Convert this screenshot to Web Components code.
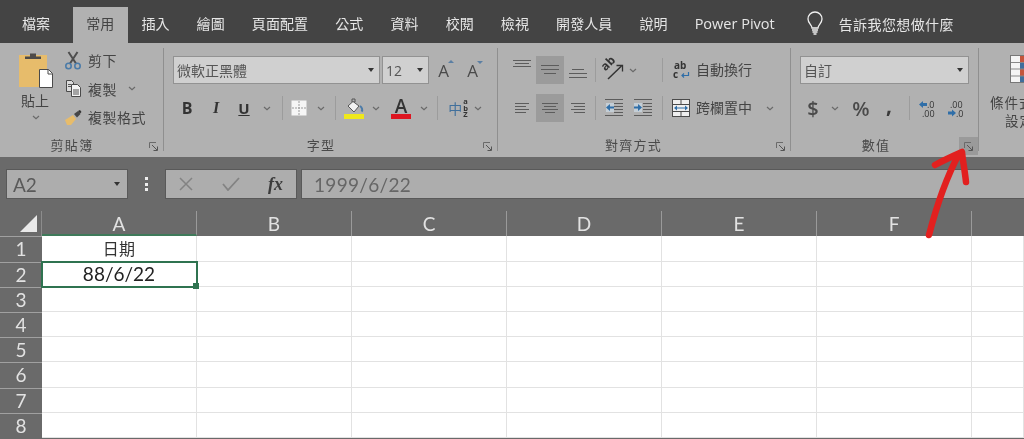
<!DOCTYPE html>
<html lang="zh-Hant">
<head>
<meta charset="utf-8">
<title>Excel</title>
<style>
  html, body { margin: 0; padding: 0; height: 439px; overflow: hidden; background: #fff; }
</style>
</head>
<body>
<excel-app></excel-app>
<script>
const CJK = '"Noto Sans CJK TC", "Open Sans", sans-serif';
const CHEV = (c = '#6a6a6a') => `<svg width="8" height="5" viewBox="0 0 8 5"><path d="M1 1l3 2.6L7 1" fill="none" stroke="${c}" stroke-width="1.2"/></svg>`;

const lines = (rows) => rows.map(([y, a, b]) => `<path d="M${a} ${y + .5}H${b}" stroke="#5c5c5c" stroke-width="1"/>`).join('');

const ICONS = {
  chev: CHEV(),
  paste: `<svg width="38" height="38" viewBox="0 0 38 38">
    <rect x="2" y="3" width="28" height="32" fill="#e7bc6b"/>
    <path d="M8 7V4.5h5V1.500h6V4.500h5V7z" fill="#4d4a48"/>
    <path d="M22.500 17.500h9l4 4v14h-13z" fill="#fff" stroke="#4a4a4a"/>
    <path d="M31 17.500v4.500h4.500" fill="none" stroke="#4a4a4a"/></svg>`,
  scissors: `<svg width="16" height="19" viewBox="0 0 16 19">
    <path d="M3.500 1l7.500 11.500M12.500 1L5 12.500" stroke="#4e4e4e" stroke-width="2" fill="none"/>
    <circle cx="3.500" cy="15" r="2.700" fill="none" stroke="#4b7ba8" stroke-width="1.600"/>
    <circle cx="12.500" cy="15" r="2.700" fill="none" stroke="#4b7ba8" stroke-width="1.600"/></svg>`,
  copy: `<svg width="17" height="17" viewBox="0 0 17 17">
    <path d="M1.500 .5h5l2 2v9h-7z" fill="#dcdcdc" stroke="#4a4a4a"/>
    <path d="M6.500 4.500h6l3 3v9h-9z" fill="#f4f4f4" stroke="#4a4a4a"/>
    <path d="M8 10h6M8 12h6M8 14h6M3 4.500h3M3 6.500h3" stroke="#555"/></svg>`,
  painter: `<svg width="17" height="15" viewBox="0 0 17 15">
    <path d="M0 10l8-5 3 4-5 6H2z" fill="#e7bc6b"/>
    <path d="M9 4l4-3 2.500 3-3.500 3.500z" fill="#464646"/>
    <path d="M13 1l2-1 1.500 2-1.500 1.500z" fill="#333"/></svg>`,
  border: `<svg width="16" height="16" viewBox="0 0 16 16">
    <rect x=".5" y=".5" width="15" height="15" fill="#f6f6f6"/>
    <path d="M8 1v14M1 8h14" stroke="#9a9a9a" stroke-dasharray="2 1"/></svg>`,
  fill: `<svg width="20" height="21" viewBox="0 0 20 21">
    <path d="M8 1l3 0 0 3-3 0z" fill="none" stroke="#555"/>
    <path d="M4 8l5-4.500 6 4.500-5 6z" fill="#f2f2f2" stroke="#555"/>
    <path d="M16 8c2 1.500 3 4 1.500 5.500" fill="none" stroke="#4b7ba8" stroke-width="2"/>
    <rect x="0" y="16" width="20" height="5" fill="#efe81c"/></svg>`,
  colorbar: `<svg width="20" height="5" viewBox="0 0 20 5"><rect width="20" height="5" fill="#dd1520"/></svg>`,
  alignTop: `<svg width="18" height="16" viewBox="0 0 18 16">${lines([[0,0,18],[3,2,16],[6,0,18]])}</svg>`,
  alignMid: `<svg width="18" height="12" viewBox="0 0 18 12">${lines([[1,0,18],[5,0,18],[9,3,15]])}</svg>`,
  alignBot: `<svg width="18" height="12" viewBox="0 0 18 12">${lines([[1,3,15],[5,0,18],[9,0,18]])}</svg>`,
  left: `<svg width="14" height="13" viewBox="0 0 14 13">${lines([[1,0,14],[4,0,11],[7,0,14],[10,0,11]])}</svg>`,
  center: `<svg width="16" height="13" viewBox="0 0 16 13">${lines([[1,0,16],[4,2,14],[7,0,16],[10,3,13]])}</svg>`,
  right: `<svg width="14" height="13" viewBox="0 0 14 13">${lines([[1,0,14],[4,3,14],[7,0,14],[10,3,14]])}</svg>`,
  outdent: `<svg width="19" height="18" viewBox="0 0 19 18">
    ${lines([[0,0,18],[4,9,18],[7,9,18],[10,9,18],[13,9,18],[16,0,18]])}
    <rect x="1" y="4" width="8" height="9" fill="#c4ced6"/>
    <path d="M1 8.500l4-3.500v2.500h4v2H5V12z" fill="#2f6ea8"/></svg>`,
  indent: `<svg width="19" height="18" viewBox="0 0 19 18">
    ${lines([[0,1,19],[4,10,19],[7,10,19],[10,10,19],[13,10,19],[16,1,19]])}
    <rect x="1" y="4" width="8" height="9" fill="#c4ced6"/>
    <path d="M9 8.500L5 5v2.500H1v2h4V12z" fill="#2f6ea8"/></svg>`,
  merge: `<svg width="18" height="18" viewBox="0 0 18 18">
    <rect x=".5" y=".5" width="17" height="17" fill="#efefef" stroke="#4a4a4a"/>
    <path d="M1 5.500h16M1 12.500h16M9 1v4M9 13v4" stroke="#4a4a4a"/>
    <path d="M2 9l3-2.500v2h8v-2l3 2.500-3 2.500v-2H5v2z" fill="#2f6ea8"/></svg>`,
  orient: `<svg width="20" height="20" viewBox="0 0 20 20">
    <text transform="translate(1.500 11.500) rotate(-45)" font-family="Open Sans" font-weight="700" font-size="12" fill="#333">ab</text>
    <path d="M4 19L17.500 6" stroke="#333" stroke-width="1.500" fill="none"/>
    <path d="M12.500 5.500h6v6" fill="none" stroke="#333" stroke-width="1.300"/></svg>`,
  wrap: `<svg width="17" height="19" viewBox="0 0 17 19">
    <text x="1" y="8" font-family="Open Sans" font-weight="700" font-size="10" fill="#333">ab</text>
    <text x="0" y="17" font-family="Open Sans" font-weight="700" font-size="10" fill="#333">c</text>
    <path d="M15.500 11v3.500H9M11 12.500l-2 2 2 2" fill="none" stroke="#2f6ea8" stroke-width="1.200"/></svg>`,
  incdec: `<svg width="16" height="17" viewBox="0 0 16 17">
    <path d="M0 4.500l4-3.500v2h4v3H4v2z" fill="#2f6ea8"/>
    <text x="8" y="8" font-family="Open Sans" font-size="9" fill="#333">.0</text>
    <text x="3" y="16.500" font-family="Open Sans" font-size="9" fill="#333">.00</text></svg>`,
  decdec: `<svg width="16" height="17" viewBox="0 0 16 17">
    <text x="3" y="8" font-family="Open Sans" font-size="9" fill="#333">.00</text>
    <path d="M9 13l-4-3.500v2H1v3h4v2z" fill="#2f6ea8"/>
    <text x="9" y="16.500" font-family="Open Sans" font-size="9" fill="#333">.0</text></svg>`,
  launcher: `<svg width="9" height="9" viewBox="0 0 9 9">
    <path d="M.5 6V.5H7" fill="none" stroke="#6a6a6a"/>
    <path d="M3 3l5 5M8.500 4.500v4h-4" fill="none" stroke="#555"/></svg>`,
  condfmt: `<svg width="20" height="28" viewBox="0 0 20 28">
    <rect x=".5" y=".5" width="19" height="27" fill="#f4f4f4" stroke="#777"/>
    <rect x="10" y="1" width="9" height="6" fill="#c4553c"/>
    <rect x="10" y="7" width="9" height="7" fill="#3f6e9c"/>
    <rect x="10" y="14" width="9" height="7" fill="#c4553c"/>
    <rect x="10" y="21" width="9" height="6" fill="#3f6e9c"/>
    <path d="M1 7.500h18M1 14h18M1 21h18" stroke="#888"/></svg>`,
  bulb: `<svg width="16" height="24" viewBox="0 0 16 24">
    <path d="M5 16c0-3-4-4.500-4-9a7 7 0 0 1 14 0c0 4.500-4 6-4 9z" fill="none" stroke="#f0f0f0" stroke-width="1.300"/>
    <path d="M5 18h6M5.500 20h5M6.500 22h3" stroke="#f0f0f0" stroke-width="1.300"/></svg>`
};

class RbIcon extends HTMLElement {
  connectedCallback() {
    const root = this.shadowRoot || this.attachShadow({ mode: 'open' });
    root.innerHTML = `<style>:host{display:inline-flex;line-height:0;} svg{overflow:visible;}</style>${ICONS[this.getAttribute('name')] || ''}`;
  }
}
customElements.define('rb-icon', RbIcon);

// one item in a ribbon row: fixed width, content centred
class RbItem extends HTMLElement {
  constructor() {
    super();
    this.attachShadow({ mode: 'open' }).innerHTML = `
      <style>
        :host { display: flex; flex: none; align-items: center; justify-content: center; height: 28px; color: #444; }
        :host([active]) { background: #9b9b9b; }
        :host([sep])::after { content: ""; width: 1px; height: 24px; background: #9c9c9c; }
      </style>
      <slot></slot>`;
  }
  connectedCallback() {
    this.style.width = this.getAttribute('w') + 'px';
  }
}
customElements.define('rb-item', RbItem);

class RibbonGroup extends HTMLElement {
  constructor() {
    super();
    this.attachShadow({ mode: 'open' }).innerHTML = `
      <style>
        :host { display: flex; flex: none; flex-direction: column; height: 103px; box-sizing: border-box; border-right: 1px solid #8f8f8f; }
        .body { flex: 1; min-height: 0; }
        .foot { display: flex; height: 16px; }
        .label { flex: 1; text-align: center; font: 13px/20px ${CJK}; color: #4a4a4a; letter-spacing: 1.300px; }
        .launch { flex: none; width: 19px; height: 18px; margin-top: 2px; display: flex; align-items: center; justify-content: center; }
        :host([hot]) .launch { background: #9a9a9a; }
      </style>
      <div class="body"><slot></slot></div>
      <div class="foot"><div class="label"></div><div class="launch"><rb-icon name="launcher"></rb-icon></div></div>`;
  }
  connectedCallback() {
    this.style.width = this.getAttribute('w') + 'px';
    const label = this.shadowRoot.querySelector('.label');
    label.textContent = this.getAttribute('label');
    const shift = +this.getAttribute('shift') || 0;
    label.style.transform = `translateX(${shift}px)`;
  }
}
customElements.define('ribbon-group', RibbonGroup);

class ExcelTabs extends HTMLElement {
  constructor() {
    super();
    const tabs = ['檔案', '常用', '插入', '繪圖', '頁面配置', '公式', '資料', '校閱', '檢視', '開發人員', '說明', 'Power Pivot'];
    this.attachShadow({ mode: 'open' }).innerHTML = `
      <style>
        :host { display: flex; height: 43px; background: #444; box-sizing: border-box; padding: 7px 0 0 8.500px; align-items: stretch; }
        .tab { flex: none; padding: 0 13.500px; font: 14px/33px ${CJK}; color: #e6e6e6; letter-spacing: .1px; }
        .tab.first { margin-right: 9px; }
        .tab.on { background: #b1b1b1; color: #444; }
        .tab.latin { font: 14.500px/34px "Open Sans", sans-serif; letter-spacing: 0; padding-right: 0; }
        .tell { display: flex; align-items: center; margin-left: 32px; height: 34px; gap: 16px; font: 14px/33px ${CJK}; color: #e6e6e6; letter-spacing: .4px; }
      </style>
      ${tabs.map((t, i) => `<div class="tab${i === 0 ? ' first' : ''}${i === 1 ? ' on' : ''}${i === 11 ? ' latin' : ''}">${t}</div>`).join('')}
      <div class="tell"><rb-icon name="bulb"></rb-icon><span>告訴我您想做什麼</span></div>`;
  }
}
customElements.define('excel-tabs', ExcelTabs);

class ExcelRibbon extends HTMLElement {
  constructor() {
    super();
    this.attachShadow({ mode: 'open' }).innerHTML = `
      <style>
        :host { display: flex; height: 114px; background: #b1b1b1; box-sizing: border-box; padding-top: 5px; overflow: hidden; font: 13px ${CJK}; color: #444; }
        .rows { display: flex; flex-direction: column; gap: 10px; padding: 8px 0 0 var(--l, 9px); }
        .row { display: flex; }
        .clip { display: flex; }
        .paste { width: 62px; flex: none; display: flex; flex-direction: column; align-items: center; padding: 4px 0 0 8px; box-sizing: border-box; font-size: 14px; line-height: 20px; }
        .paste rb-icon { margin-left: 2px; }
        .paste .c { margin-top: 5px; display: flex; }
        .small { display: flex; flex-direction: column; margin-top: -2px; }
        .small .row { height: 28.500px; align-items: center; }
        .small .txt { width: 24px; display: flex; justify-content: center; margin-left: -1px; }
        .small span { margin-left: 3px; font-size: 14px; letter-spacing: .5px; }
        .combo { box-sizing: border-box; height: 28px; display: flex; align-items: center; justify-content: space-between; background: #d0d0d0; border: 1px solid #929292; padding: 0 5px 0 3px; font-size: 14px; color: #555; flex: none; }
        .arrow { width: 0; height: 0; border: 3.500px solid transparent; border-top: 4px solid #333; border-bottom: 0; flex: none; }
        .grow { font: 17px "Open Sans", sans-serif; position: relative; color: #4a4a4a; left: -2px; }
        .grow::after { content: ""; position: absolute; top: 1px; left: 10px; border: 3px solid transparent; border-bottom: 3px solid #5b7fa3; border-top: 0; }
        .shrink { left: -1px; }
        .shrink::after { border-bottom: 0; border-top: 3px solid #5b7fa3; top: 2px; }
        .b { font: 700 16px "Open Sans", sans-serif; color: #333; }
        .i { font: italic 700 16px "Liberation Serif", serif; color: #333; }
        .u { font: 700 15px "Open Sans", sans-serif; color: #333; text-decoration: underline; }
        .stack { display: flex; flex-direction: column; align-items: center; }
        .acolor { font: 600 19px/16px "Open Sans", sans-serif; color: #333; }
        .zh { display: flex; align-items: center; color: #41709c; font-size: 14px; }
        .zh b { display: flex; flex-direction: column; color: #333; font: 700 7.500px/6.500px "Open Sans", sans-serif; margin-left: 1px; }
        .num { font: 600 20px "Open Sans", sans-serif; color: #4a4a4a; }
        .comma { font: 700 21px "Open Sans", sans-serif; color: #3a3a3a; margin-top: -6px; }
        .wide { font-size: 14px; white-space: nowrap; display: flex; align-items: center; height: 26px; }
        .cond { flex: none; padding: 0 0 0 11px; white-space: nowrap; line-height: 18px; font-size: 13.500px; width: 82px; box-sizing: border-box; }
        .cond rb-icon { margin: 7px 0 10px 20px; display: flex; }
        .cond div { letter-spacing: 1px; }
      </style>

      <ribbon-group w="164" label="剪貼簿">
        <div class="clip">
          <div class="paste">
            <rb-icon name="paste"></rb-icon>
            <span>貼上</span>
            <div class="c"><rb-icon name="chev"></rb-icon></div>
          </div>
          <div class="small">
            <div class="row"><div class="txt"><rb-icon name="scissors"></rb-icon></div><span>剪下</span></div>
            <div class="row"><div class="txt"><rb-icon name="copy"></rb-icon></div><span>複製</span><rb-item w="30"><rb-icon name="chev"></rb-icon></rb-item></div>
            <div class="row"><div class="txt"><rb-icon name="painter"></rb-icon></div><span>複製格式</span></div>
          </div>
        </div>
      </ribbon-group>

      <ribbon-group w="334" label="字型">
        <div class="rows">
          <div class="row">
            <div class="combo" style="width:207px"><span>微軟正黑體</span><i class="arrow"></i></div>
            <div class="combo" style="width:47px;margin-left:2px;font:14px 'Open Sans',sans-serif"><span>12</span><i class="arrow"></i></div>
            <rb-item w="29" style="margin-left:2px"><span class="grow">A</span></rb-item>
            <rb-item w="27"><span class="grow shrink">A</span></rb-item>
          </div>
          <div class="row">
            <rb-item w="28"><span class="b">B</span></rb-item>
            <rb-item w="30"><span class="i">I</span></rb-item>
            <rb-item w="26"><span class="u">U</span></rb-item>
            <rb-item w="20"><rb-icon name="chev"></rb-icon></rb-item>
            <rb-item w="10" sep></rb-item>
            <rb-item w="24"><rb-icon name="border"></rb-icon></rb-item>
            <rb-item w="20"><rb-icon name="chev"></rb-icon></rb-item>
            <rb-item w="8" sep></rb-item>
            <rb-item w="30"><rb-icon name="fill"></rb-icon></rb-item>
            <rb-item w="14"><rb-icon name="chev"></rb-icon></rb-item>
            <rb-item w="36"><div class="stack"><span class="acolor">A</span><rb-icon name="colorbar"></rb-icon></div></rb-item>
            <rb-item w="10"><rb-icon name="chev"></rb-icon></rb-item>
            <rb-item w="16" sep></rb-item>
            <rb-item w="26"><span class="zh">中<b><span>a</span><span>b</span><span>Z</span></b></span></rb-item>
            <rb-item w="14"><rb-icon name="chev"></rb-icon></rb-item>
          </div>
        </div>
      </ribbon-group>

      <ribbon-group w="293" label="對齊方式" shift="-1">
        <div class="rows" style="--l:10px">
          <div class="row">
            <rb-item w="28" style="align-items:flex-start;padding-top:4px;box-sizing:border-box"><rb-icon name="alignTop"></rb-icon></rb-item>
            <rb-item w="28" active><rb-icon name="alignMid"></rb-icon></rb-item>
            <rb-item w="27" style="align-items:flex-end;padding-bottom:4px;box-sizing:border-box"><rb-icon name="alignBot"></rb-icon></rb-item>
            <rb-item w="9" sep></rb-item>
            <rb-item w="28"><rb-icon name="orient"></rb-icon></rb-item>
            <rb-item w="10"><rb-icon name="chev"></rb-icon></rb-item>
            <rb-item w="20"></rb-item>
            <rb-item w="8" sep></rb-item>
            <rb-item w="30"><rb-icon name="wrap"></rb-icon></rb-item>
            <div class="wide">自動換行</div>
          </div>
          <div class="row">
            <rb-item w="28"><rb-icon name="left"></rb-icon></rb-item>
            <rb-item w="28" active><rb-icon name="center"></rb-icon></rb-item>
            <rb-item w="27"><rb-icon name="right"></rb-icon></rb-item>
            <rb-item w="9" sep></rb-item>
            <rb-item w="28"><rb-icon name="outdent"></rb-icon></rb-item>
            <rb-item w="28"><rb-icon name="indent"></rb-icon></rb-item>
            <rb-item w="12" sep></rb-item>
            <rb-item w="26"><rb-icon name="merge"></rb-icon></rb-item>
            <div class="wide" style="margin-left:2px">跨欄置中</div>
            <rb-item w="36"><rb-icon name="chev"></rb-icon></rb-item>
          </div>
        </div>
      </ribbon-group>

      <ribbon-group w="188" label="數值" hot shift="1">
        <div class="rows">
          <div class="row">
            <div class="combo" style="width:169px"><span>自訂</span><i class="arrow"></i></div>
          </div>
          <div class="row">
            <rb-item w="26"><span class="num">$</span></rb-item>
            <rb-item w="18"><rb-icon name="chev"></rb-icon></rb-item>
            <rb-item w="34"><span class="num">%</span></rb-item>
            <rb-item w="22"><span class="comma">,</span></rb-item>
            <rb-item w="18" sep></rb-item>
            <rb-item w="18"><rb-icon name="incdec"></rb-icon></rb-item>
            <rb-item w="18" style="margin-left:10px"><rb-icon name="decdec"></rb-icon></rb-item>
          </div>
        </div>
      </ribbon-group>

      <div class="cond">
        <rb-icon name="condfmt"></rb-icon>
        <div>條件式</div>
        <div style="padding-left:15px">設定</div>
      </div>`;
  }
}
customElements.define('excel-ribbon', ExcelRibbon);

class FormulaBar extends HTMLElement {
  constructor() {
    super();
    this.attachShadow({ mode: 'open' }).innerHTML = `
      <style>
        :host { display: flex; height: 42px; background: #6a6a6a; box-sizing: border-box; padding: 12px 0 0 6px; align-items: flex-start; color: #5a5a5a; }
        .box { box-sizing: border-box; height: 30px; background: #adadad; border: 1px solid #595959; display: flex; align-items: center; }
        .name { width: 122px; padding: 0 7px 0 6px; justify-content: space-between; font: 19px "Lato", sans-serif; }
        .arrow { border: 3.500px solid transparent; border-top: 4px solid #333; border-bottom: 0; }
        .dots { width: 37px; display: flex; flex-direction: column; align-items: center; justify-content: center; gap: 2.500px; height: 30px; flex: none; }
        .dots i { width: 3px; height: 3px; background: #eee; }
        .btns { width: 132px; justify-content: space-between; padding: 0 13px; }
        .fx { font: italic 700 18px "Liberation Serif", serif; color: #3c3c3c; }
        .input { flex: 1; margin-left: 4px; padding-left: 12px; font: 19px "Lato", sans-serif; border-right: 0; letter-spacing: .3px; color: #666; }
      </style>
      <div class="box name"><span>A2</span><i class="arrow"></i></div>
      <div class="dots"><i></i><i></i><i></i></div>
      <div class="box btns">
        <svg width="14" height="14" viewBox="0 0 14 14"><path d="M1 1l12 12M13 1L1 13" stroke="#838383" stroke-width="1.500"/></svg>
        <svg width="18" height="14" viewBox="0 0 18 14"><path d="M1 7l5 6L17 1" fill="none" stroke="#838383" stroke-width="1.800"/></svg>
        <span class="fx">fx</span>
      </div>
      <div class="box input">1999/6/22</div>`;
  }
}
customElements.define('formula-bar', FormulaBar);

class SheetGrid extends HTMLElement {
  constructor() {
    super();
    const cols = ['A', 'B', 'C', 'D', 'E', 'F'];
    const heights = [26, 25, 25, 25, 25, 26, 25, 25];
    const data = { '1-0': '<span class="cjk">日期</span>', '2-0': '88/6/22' };
    let cells = `<div class="corner"><svg width="19" height="19" viewBox="0 0 19 19"><path d="M18 1v17H1z" fill="#e9e9e9"/></svg></div>`;
    cells += cols.map((c, i) => `<div class="ch${i === 0 ? ' sel' : ''}">${c}</div>`).join('') + '<div class="ch last"></div>';
    heights.forEach((h, r) => {
      cells += `<div class="rh">${r + 1}</div>`;
      for (let c = 0; c < 7; c++) {
        const t = data[`${r + 1}-${c}`] || '';
        cells += `<div class="cell${r === 1 && c === 0 ? ' active' : ''}">${t}</div>`;
      }
    });
    this.attachShadow({ mode: 'open' }).innerHTML = `
      <style>
        :host { display: block; background: #6a6a6a; padding-top: 12px; height: 240px; box-sizing: border-box; overflow: hidden; }
        .grid { display: grid; grid-template-columns: 42px repeat(6, 155px) 52px; grid-template-rows: 25px ${heights.map(h => h + 'px').join(' ')}; background: #fff; }
        .corner { background: #6a6a6a; display: flex; justify-content: flex-end; align-items: flex-end; padding: 0 3px 3px 0; box-sizing: border-box; border-right: 1px solid #8c8c8c; }
        .ch { background: #6a6a6a; color: #e2e2e2; font: 19px/25px "Lato", sans-serif; text-align: center; box-sizing: border-box; border-right: 1px solid #9a9a9a; }
        .ch.sel { border-bottom: 2px solid #3f7a5a; }
        .ch.last { border-right: 0; }
        .rh { background: #6a6a6a; color: #e2e2e2; font: 19px/23px "Lato", sans-serif; text-align: center; box-sizing: border-box; border-top: 1px solid #a0a0a0; }
        .cell { box-sizing: border-box; border-right: 1px solid #e2e2e2; border-bottom: 1px solid #e2e2e2; text-align: center; color: #333; font: 19px/24px "Lato", ${CJK}; }
        .cjk { font: 16px/24px ${CJK}; letter-spacing: .2px; }
        .active { position: relative; outline: 2px solid #2f7350; outline-offset: -1px; z-index: 1; color: #222; }
        .active::after { content: ""; position: absolute; right: -3px; bottom: -3px; width: 6px; height: 6px; background: #2f7350; }
      </style>
      <div class="grid">${cells}</div>`;
  }
}
customElements.define('sheet-grid', SheetGrid);

class ExcelApp extends HTMLElement {
  constructor() {
    super();
    this.attachShadow({ mode: 'open' }).innerHTML = `
      <style>
        :host { display: block; position: relative; width: 1024px; height: 439px; overflow: hidden; }
        .wrap { filter: blur(.3px); }
        .arrow { position: absolute; left: 0; top: 0; pointer-events: none; }
      </style>
      <div class="wrap">
        <excel-tabs></excel-tabs>
        <excel-ribbon></excel-ribbon>
        <formula-bar></formula-bar>
        <sheet-grid></sheet-grid>
      </div>
      <svg class="arrow" width="1024" height="439" viewBox="0 0 1024 439">
        <path d="M929 235C935 212 946 178 959 154M935 165C944 160 953 156 962 152C963 162 965 172 966 182" fill="none" stroke="#e2201f" stroke-width="6.500" stroke-linecap="round" stroke-linejoin="round"/>
      </svg>`;
  }
}
customElements.define('excel-app', ExcelApp);
</script>
</body>
</html>
